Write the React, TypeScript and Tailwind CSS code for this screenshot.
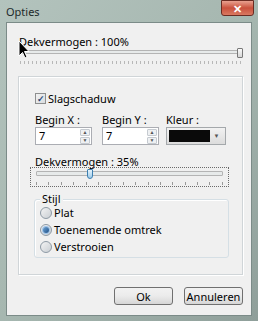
import { FC } from "react";

const Spin: FC<{ value: string }> = ({ value }) => (
  <div className="flex h-[18px] w-[57px] border border-[#abadb3] bg-white">
    <span className="flex-1 pl-[3px] leading-[16px]">{value}</span>
    <div className="flex w-[12px] flex-col gap-[1px] p-[1px]">
      <div className="flex flex-1 items-center justify-center rounded-[1px] border border-[#c5cad0] bg-[#eef0f2] text-[5px] leading-none text-[#555]">▲</div>
      <div className="flex flex-1 items-center justify-center rounded-[1px] border border-[#c5cad0] bg-[#eef0f2] text-[5px] leading-none text-[#555]">▼</div>
    </div>
  </div>
);

const Ticks: FC<{ count: number; dense?: boolean }> = ({ count, dense }) => (
  <div className="flex justify-between">
    {Array.from({ length: count }).map((_, i) => (
      <span key={i} className={dense ? "h-[3px] w-[1px] bg-[#b8b8b8]" : "h-[3px] w-[1px] bg-[#9a9a9a]"} />
    ))}
  </div>
);

const Radio: FC<{ label: string; checked?: boolean }> = ({ label, checked }) => (
  <div className="flex h-[15px] items-center gap-[2px]">
    <span className="flex h-[12px] w-[12px] items-center justify-center rounded-full border border-[#8e9aa5] bg-gradient-to-br from-[#f4f4f4] to-[#c9ced3]">
      {checked && <span className="h-[6px] w-[6px] rounded-full bg-gradient-to-br from-[#6fa6d8] to-[#1d4f86] shadow-[0_0_0_1px_#9cc3ea]" />}
    </span>
    <span>{label}</span>
  </div>
);

export default function App() {
  return (
    <div
      className="relative flex h-[321px] w-[258px] flex-col bg-gradient-to-br from-[#b3c3bd] via-[#a6b7b0] to-[#8f9f9a] text-[11px] leading-[13px] text-black"
      style={{ fontFamily: '"Noto Sans", "Open Sans", sans-serif' }}
    >
      {/* title bar */}
      <div className="flex h-[22px] items-start justify-between pl-[6px] pr-[4px]">
        <span className="mt-[5px] text-[#1d2a2a]">Opties</span>
        <div className="flex h-[16px] w-[33px] items-center justify-center rounded-b-[3px] border border-[#6b2b22] bg-gradient-to-b from-[#e8a08f] via-[#c9503c] to-[#d97861] text-[11px] font-bold leading-none text-white">
          ✕
        </div>
      </div>

      {/* client area */}
      <div className="mx-[6px] mb-[5px] flex flex-1 flex-col border border-[#7b8b88] bg-[#f0f0f0] pl-[11px] pt-[12px]">
        <div className="ml-[1px]">Dekvermogen : 100%</div>
        <div className="relative ml-[2px] h-[10px] w-[222px]">
          <div className="absolute left-0 right-0 top-[2px] h-[4px] rounded-[1px] border border-[#b4b4b4] bg-[#e7eaea]" />
          <div className="absolute right-[-1px] top-0 h-[10px] w-[6px] rounded-[1px] border border-[#787878] bg-gradient-to-b from-[#fafafa] to-[#d6d6d6]" />
        </div>
        <div className="ml-[2px] mt-[3px] w-[221px]">
          <Ticks count={56} dense />
        </div>

        {/* panel */}
        <div className="mt-[12px] flex h-[199px] w-[225px] flex-col border border-[#d0d5d8] pl-[16px] pt-[15px] shadow-[inset_1px_1px_0_#ffffff,1px_1px_0_#ffffff]">
          <div className="flex h-[13px] items-center gap-[2px]">
            <span className="flex h-[11px] w-[11px] items-center justify-center border border-[#8e8f8f] bg-gradient-to-br from-[#f2f2f2] to-[#d9dde0] text-[9px] font-bold leading-none text-[#2a4a7a]">
              ✓
            </span>
            <span>Slagschaduw</span>
          </div>

          <div className="mt-[8px] flex">
            <div className="flex w-[67px] flex-col">
              <span>Begin X :</span>
              <div className="mt-[1px]"><Spin value="7" /></div>
            </div>
            <div className="flex w-[64px] flex-col">
              <span>Begin Y :</span>
              <div className="mt-[1px]"><Spin value="7" /></div>
            </div>
            <div className="flex flex-col">
              <span>Kleur :</span>
              <div className="mt-[1px] flex h-[18px] w-[60px] border border-[#a4a8ab] bg-gradient-to-b from-[#f2f2f2] to-[#dcdcdc] p-[2px]">
                <div className="flex-1 bg-[#0a0a0a]" />
                <div className="flex w-[13px] items-center justify-center text-[6px] text-[#555]">▼</div>
              </div>
            </div>
          </div>

          <div className="mt-[10px]">Dekvermogen : 35%</div>
          <div className="-ml-[5px] mt-[-1px] flex h-[20px] w-[199px] flex-col border border-dotted border-[#6b6b6b] px-[5px] pt-[2px]">
            <div className="relative h-[9px]">
              <div className="absolute left-0 right-0 top-[1px] h-[5px] rounded-[1px] border border-[#b4b4b4] bg-[#e7eaea]" />
              <div className="absolute left-[51px] top-[-1px] h-[10px] w-[6px] rounded-b-[3px] rounded-t-[1px] border border-[#3c7fb1] bg-gradient-to-b from-[#e5f3fb] to-[#9ecbe9]" />
            </div>
            <div className="mt-[3px]">
              <Ticks count={16} />
            </div>
          </div>

          {/* Stijl group */}
          <div className="relative -ml-[1px] mt-[12px] h-[59px] w-[195px] rounded-[3px] border border-[#d5dfe5] shadow-[inset_1px_1px_0_#ffffff]">
            <span className="absolute left-[5px] top-[-8px] bg-[#f0f0f0] px-[2px]">Stijl</span>
            <div className="flex flex-col gap-[2px] pl-[5px] pt-[5px]">
              <Radio label="Plat" />
              <Radio label="Toenemende omtrek" checked />
              <Radio label="Verstrooien" />
            </div>
          </div>
        </div>

        {/* buttons */}
        <div className="mt-[12px] flex w-[225px] justify-end gap-[11px]">
          <button className="h-[18px] w-[59px] rounded-[3px] border border-[#707070] bg-gradient-to-b from-[#f2f2f2] via-[#ebebeb] to-[#d6d6d6] leading-none">Ok</button>
          <button className="h-[18px] w-[59px] rounded-[3px] border border-[#707070] bg-gradient-to-b from-[#f2f2f2] via-[#ebebeb] to-[#d6d6d6] leading-none">Annuleren</button>
        </div>
      </div>

      {/* mouse cursor */}
      <svg className="absolute left-[18px] top-[40px]" width="12" height="19" viewBox="0 0 12 19">
        <path d="M1 1 L1 16 L4.5 12.5 L7 18 L9 17 L6.5 11.5 L11 11.5 Z" fill="#000" stroke="#fff" strokeWidth="1" />
      </svg>
    </div>
  );
}
